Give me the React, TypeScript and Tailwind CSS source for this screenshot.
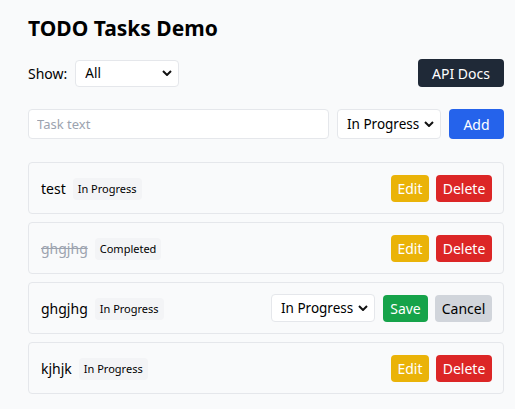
import { useState } from "react";

type Status = "In Progress" | "Completed";

type Task = {
  id: number;
  text: string;
  status: Status;
};

const initialTasks: Task[] = [
  { id: 1, text: "test", status: "In Progress" },
  { id: 2, text: "ghgjhg", status: "Completed" },
  { id: 3, text: "ghgjhg", status: "In Progress" },
  { id: 4, text: "kjhjk", status: "In Progress" },
];

function Chevron() {
  return (
    <svg
      viewBox="0 0 10 6"
      className="pointer-events-none absolute right-[7px] top-1/2 h-[6px] w-[10px] -translate-y-1/2"
    >
      <path d="M1 1l4 4 4-4" fill="none" stroke="#111" strokeWidth="2" />
    </svg>
  );
}

function Select({
  value,
  options,
  onChange,
  className,
}: {
  value: string;
  options: string[];
  onChange: (v: string) => void;
  className: string;
}) {
  return (
    <div className={"relative " + className}>
      <select
        value={value}
        onChange={(e) => onChange(e.target.value)}
        className="h-full w-full appearance-none rounded border border-gray-200 bg-white pl-[9px] pr-[18px] text-[13.5px] text-black outline-none"
      >
        {options.map((o) => (
          <option key={o}>{o}</option>
        ))}
      </select>
      <Chevron />
    </div>
  );
}

export default function App() {
  const [tasks] = useState(initialTasks);
  const [filter, setFilter] = useState("All");
  const [newStatus, setNewStatus] = useState("In Progress");
  const [editStatus, setEditStatus] = useState("In Progress");
  const editingId = 3;

  return (
    <div
      className="min-h-screen bg-[#f9fafb] pl-[28px] pr-[11px] pt-[14px] text-black"
      style={{ fontFamily: '"Segoe UI", "Noto Sans", sans-serif' }}
    >
      <h1 className="text-[21px] font-bold leading-[28px]">TODO Tasks Demo</h1>

      <div className="mt-[17px] flex items-center justify-between">
        <div className="flex items-center gap-[8px]">
          <span className="text-[14px]">Show:</span>
          <Select
            value={filter}
            options={["All", "In Progress", "Completed"]}
            onChange={setFilter}
            className="h-[27px] w-[104px]"
          />
        </div>
        <button className="h-[28px] w-[86px] rounded bg-[#1f2937] text-[14px] text-white">
          API Docs
        </button>
      </div>

      <div className="mt-[22px] flex gap-2">
        <input
          placeholder="Task text"
          className="h-[30px] flex-1 rounded border border-gray-200 bg-white px-2 text-[13px] outline-none placeholder:text-[#9ca3af]"
        />
        <Select
          value={newStatus}
          options={["In Progress", "Completed"]}
          onChange={setNewStatus}
          className="h-[30px] w-[104px]"
        />
        <button className="h-[30px] w-[55px] rounded bg-[#2563eb] text-[14px] text-white">
          Add
        </button>
      </div>

      <div className="mt-[23px] flex flex-col gap-2">
        {tasks.map((t) => (
          <div
            key={t.id}
            className="flex h-[52px] items-center justify-between rounded border border-gray-200 pl-3 pr-[11px]"
          >
            <div className="flex items-center gap-[7px]">
              <span
                className={
                  "text-[14px] " +
                  (t.status === "Completed" ? "text-[#9ca3af] line-through" : "")
                }
              >
                {t.text}
              </span>
              <span className="mt-[2px] rounded bg-[#f3f4f6] px-[5px] py-[3px] text-[11px]">
                {t.status}
              </span>
            </div>
            {t.id === editingId ? (
              <div className="flex items-center gap-[7px]">
                <Select
                  value={editStatus}
                  options={["In Progress", "Completed"]}
                  onChange={setEditStatus}
                  className="mr-[1px] h-[28px] w-[104px]"
                />
                <button className="h-[27px] w-[45px] rounded bg-[#16a34a] text-[14px] text-white">
                  Save
                </button>
                <button className="h-[27px] w-[57px] rounded bg-[#d1d5db] text-[14px] text-black">
                  Cancel
                </button>
              </div>
            ) : (
              <div className="flex items-center gap-[7px]">
                <button className="h-[27px] w-[38px] rounded bg-[#eab308] text-[14px] text-white">
                  Edit
                </button>
                <button className="h-[27px] w-[56px] rounded bg-[#dc2626] text-[14px] text-white">
                  Delete
                </button>
              </div>
            )}
          </div>
        ))}
      </div>
    </div>
  );
}
